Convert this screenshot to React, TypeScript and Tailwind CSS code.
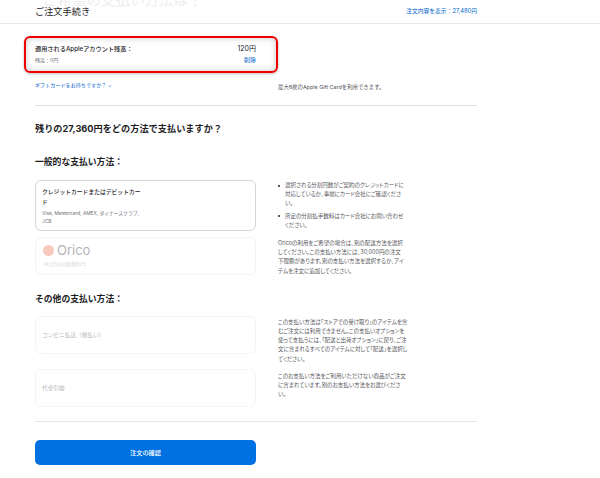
const font = "[font-family:'Inter','Noto_Sans_CJK_JP',sans-serif]";

function Row({ left, right, className }: { left: React.ReactNode; right?: React.ReactNode; className?: string }) {
  return (
    <div className={`flex gap-[22px] ${className ?? ""}`}>
      <div className="w-[221px] shrink-0">{left}</div>
      <div className="w-[135px] text-[5.5px] leading-[9.2px] whitespace-nowrap text-[#55555a] [font-feature-settings:'palt']">{right}</div>
    </div>
  );
}

function Option({ label }: { label: string }) {
  return (
    <div className="flex h-[38px] items-center rounded-[6px] border border-[#f5f5f6] px-[6px] text-[5.7px] text-[#b5b5b8]">
      {label}
    </div>
  );
}

function Bullet({ children }: { children: React.ReactNode }) {
  return (
    <li className="flex">
      <span className="mt-[3.5px] mr-[5px] h-[2px] w-[2px] shrink-0 rounded-full bg-[#222]" />
      <span>{children}</span>
    </li>
  );
}

export default function App() {
  return (
    <div className={`${font} h-[478px] w-[600px] overflow-hidden bg-white text-[#1d1d1f]`}>
      <header className="relative flex h-[24px] items-center justify-between overflow-hidden border-b border-[#e8e8e9] pl-[35px] pr-[123px]">
        <span className="absolute -top-[11px] left-[43px] text-[14.5px] text-[#eeeeef]">ご希望の支払い方法は？</span>
        <h1 className="relative text-[9.2px] font-normal">ご注文手続き</h1>
        <a className="relative text-[5.8px] text-[#0066cc]">注文内容を表示：27,480円</a>
      </header>

      <main className="px-[35px]">
        <div className="-mx-[11px] mt-[12px] flex h-[37px] w-[254px] justify-between rounded-[6px] border-2 border-[#ee0000] py-[6px] pl-[9px] pr-[20px] shadow-[inset_0_0_6px_rgba(0,0,0,0.22),0_1px_3px_rgba(0,0,0,0.25)]">
          <div>
            <p className="text-[6.2px] leading-[9px] font-medium">適用されるAppleアカウント残高：</p>
            <p className="mt-[3px] text-[5px] leading-[8px] text-[#6e6e73]">残高：0円</p>
          </div>
          <div className="text-right">
            <p className="text-[7px] leading-[9px]">120円</p>
            <p className="mt-[3px] text-[6px] leading-[8px] text-[#0066cc]">削除</p>
          </div>
        </div>

        <div className="mt-[7px] flex h-[24px] gap-[23px]">
          <p className="w-[220px] text-[5.1px] leading-[10px] text-[#0066cc]">ギフトカードをお持ちですか？ ⌄</p>
          <p className="pt-[3px] text-[5.4px] leading-[8px] text-[#55555a]">最大8枚のApple Gift Cardを利用できます。</p>
        </div>

        <div className="mt-[1px] h-px w-[442px] bg-[#dedee0]" />

        <h2 className="mt-[15px] text-[9.2px] leading-[16px] font-bold">残りの27,360円をどの方法で支払いますか？</h2>
        <h3 className="mt-[18px] text-[8.8px] leading-[14px] font-bold">一般的な支払い方法：</h3>

        <Row
          className="mt-[11px]"
          left={
            <div className="flex flex-col gap-[6px]">
              <div className="h-[51px] rounded-[6px] border border-[#d6d6d8] px-[6px] py-[6px]">
                <p className="w-[100px] text-[5.8px] leading-[10px] font-medium">クレジットカードまたはデビットカー<br />ド</p>
                <p className="mt-[2px] w-[103px] text-[4.8px] leading-[8px] text-[#6e6e73]">Visa, Mastercard, AMEX, ダイナースクラブ, JCB</p>
              </div>
              <div className="h-[38px] rounded-[6px] border border-[#f5f5f6] px-[7px] pt-[3px]">
                <div className="flex items-center gap-[3px]">
                  <span className="h-[11px] w-[11px] rounded-full bg-[#f7c9bd]" />
                  <span className="text-[13px] leading-[18px] text-[#b4b4b8]">Orico</span>
                </div>
                <p className="mt-[3px] text-[4.4px] leading-[6px] text-[#d2d2d5]">24か月の分割金利0%</p>
              </div>
            </div>
          }
          right={
            <div className="pt-[1px]">
              <ul className="flex flex-col gap-[3px]">
                <Bullet>選択される分割回数がご契約のクレジットカードに<br />対応しているか、事前にカード会社にご確認くださ<br />い。</Bullet>
                <Bullet>所定の分割払手数料はカード会社にお問い合わせ<br />ください。</Bullet>
              </ul>
              <p className="mt-[9px]">Oricoの利用をご希望の場合は、別の配送方法を選択<br />してください。この支払い方法には、30,000円の注文<br />下限額があります。別の支払い方法を選択するか、アイ<br />テムを注文に追加してください。</p>
            </div>
          }
        />

        <h3 className="mt-[16px] text-[8.8px] leading-[14px] font-bold">その他の支払い方法：</h3>

        <Row
          className="mt-[10px] h-[38px]"
          left={<Option label="コンビニ払込（前払い）" />}
          right={<p className="pt-[2px]">この支払い方法は「ストアでの受け取り」のアイテムを含<br />むご注文には利用できません。この支払いオプションを<br />使って支払うには、「配送と出荷オプション」に戻り、ご注<br />文に含まれるすべてのアイテムに対して「配送」を選択し<br />てください。</p>}
        />
        <Row
          className="mt-[15px] h-[38px]"
          left={<Option label="代金引換" />}
          right={<p className="pt-[3px]">このお支払い方法をご利用いただけない商品がご注文<br />に含まれています。別のお支払い方法をお選びくださ<br />い。</p>}
        />

        <div className="mt-[14px] h-px w-[442px] bg-[#e6e6e8]" />

        <button className="mt-[18px] h-[25px] w-[221px] rounded-[5px] bg-[#0071e3] text-[6.2px] font-medium text-white">注文の確認</button>
      </main>
    </div>
  );
}
